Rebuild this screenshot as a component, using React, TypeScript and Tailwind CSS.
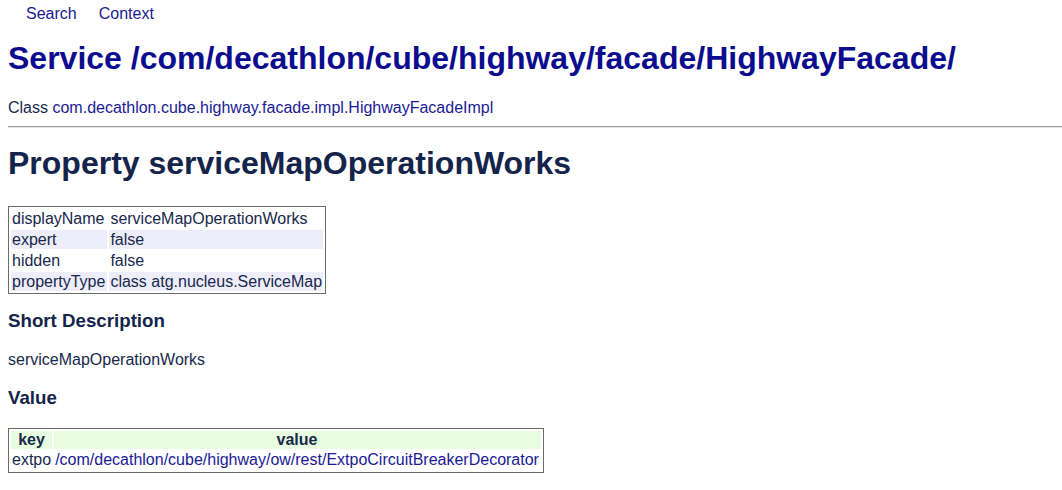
import React from 'react';

const props = [
  ['displayName', 'serviceMapOperationWorks', false],
  ['expert', 'false', true],
  ['hidden', 'false', false],
  ['propertyType', 'class atg.nucleus.ServiceMap', true],
] as const;

export default function App() {
  return (
    <div className="min-h-[490px] bg-white text-[16px] leading-[1.15] text-[#18284c] font-['Liberation_Sans',Arial,sans-serif]">
      <div className="px-2 pt-[5px]">
        <div className="flex gap-[22px] pl-[18px] text-[#1a1a96]">
          <a href="#">Search</a>
          <a href="#">Context</a>
        </div>

        <h1 className="mt-[17px] text-[32px] font-bold text-[#0c0c8e]">
          Service /com/decathlon/cube/highway/facade/HighwayFacade/
        </h1>

        <p className="mt-[22px]">
          Class <a href="#" className="text-[#1a1a96]">com.decathlon.cube.highway.facade.impl.HighwayFacadeImpl</a>
        </p>
      </div>

      <hr className="ml-2 mt-[8px] border-0 border-t border-t-[#9a9a9a] border-b border-b-[#e6e6e6]" />

      <div className="px-2">
        <h2 className="mt-[17px] text-[32px] font-bold text-[#14244a]">Property serviceMapOperationWorks</h2>

        <table className="mt-[25px] border border-[#6b6b6b] border-separate border-spacing-[2px]">
          <tbody>
            {props.map(([k, v, alt]) => (
              <tr key={k}>
                <td className={`p-0 pl-[1px] pr-[2px] leading-[19px] ${alt ? 'bg-[#eeeefa]' : ''}`}>{k}</td>
                <td className={`p-0 px-[1px] leading-[19px] ${alt ? 'bg-[#eeeefa]' : ''}`}>{v}</td>
              </tr>
            ))}
          </tbody>
        </table>

        <h3 className="mt-[16px] text-[18.72px] font-bold text-[#14244a]">Short Description</h3>
        <p className="mt-[19px]">serviceMapOperationWorks</p>

        <h3 className="mt-[18px] text-[18.72px] font-bold text-[#14244a]">Value</h3>

        <table className="mt-[19px] border border-[#6b6b6b] border-separate border-spacing-[2px]">
          <thead>
            <tr>
              <th className="p-0 px-[1px] leading-[18.5px] font-bold bg-[#e8fce0] text-center">key</th>
              <th className="p-0 pl-[1px] pr-[2px] leading-[18.5px] font-bold bg-[#e8fce0] text-center">value</th>
            </tr>
          </thead>
          <tbody>
            <tr>
              <td className="p-0 px-[1px] leading-[18.5px]">extpo</td>
              <td className="p-0 pl-[1px] pr-[2px] leading-[18.5px]">
                <a href="#" className="text-[#1a1a96]">/com/decathlon/cube/highway/ow/rest/ExtpoCircuitBreakerDecorator</a>
              </td>
            </tr>
          </tbody>
        </table>
      </div>
    </div>
  );
}
